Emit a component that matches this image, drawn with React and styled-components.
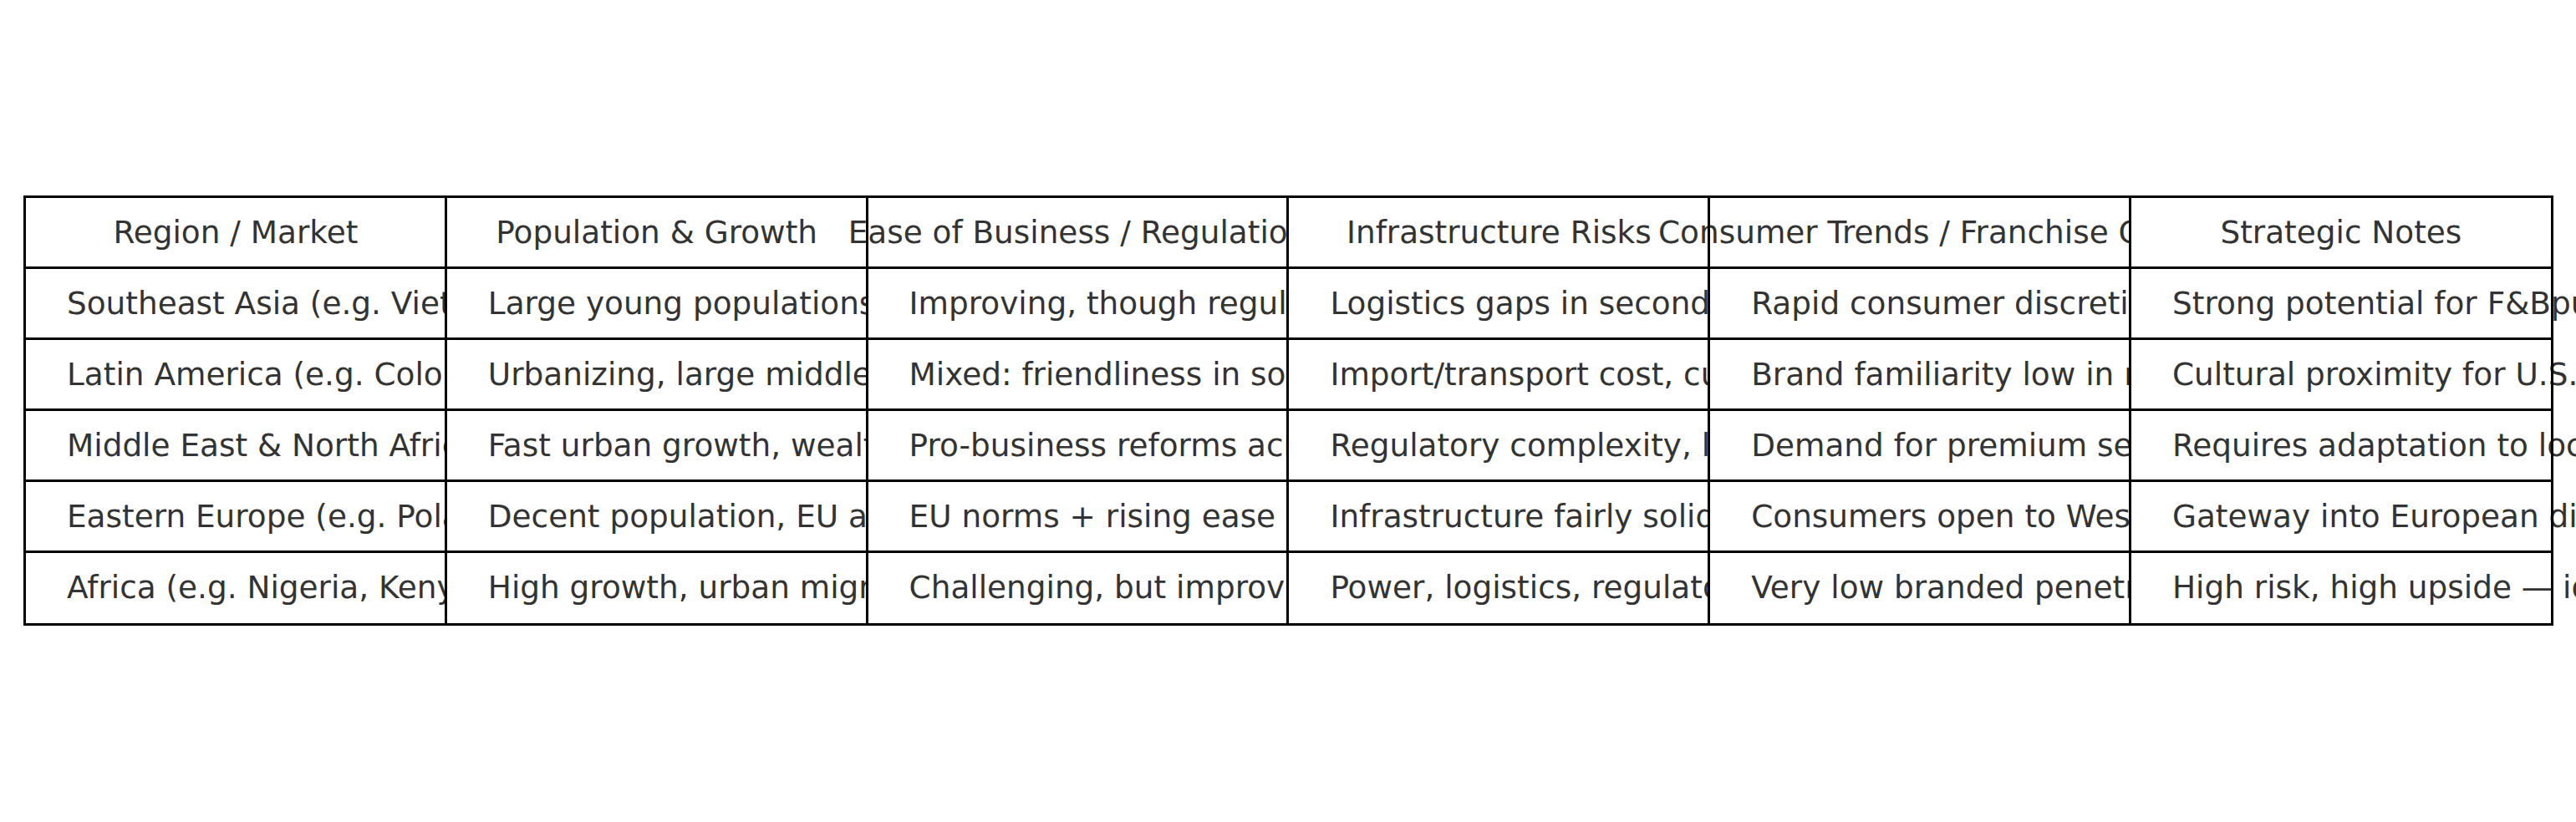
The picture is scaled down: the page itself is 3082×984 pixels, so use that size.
import React from 'react'
import styled, { createGlobalStyle } from 'styled-components'

const GlobalStyle = createGlobalStyle`
  html, body {
    margin: 0;
    padding: 0;
    background: #fff;
    overflow: hidden;
  }
`;

const Page = styled.div`
  width: 3082px;
  height: 984px;
  overflow: hidden;
  padding: 236px 0 0 30px;
  box-sizing: border-box;
  font-family: "DejaVu Sans", "Liberation Sans", sans-serif;
`;

const Table = styled.div`
  display: grid;
  grid-template-columns: repeat(6, 503.8px);
  grid-auto-rows: 85.1px;
  width: 3023px;
`;

const Cell = styled.div`
  position: relative;
  display: flex;
  align-items: center;
  justify-content: ${p => (p.$head ? 'center' : 'flex-start')};
  padding-left: ${p => (p.$head ? '0' : '50px')};
  padding-bottom: 2px;
  box-sizing: border-box;
  background: #fff;
  outline: 3px solid #000;
  outline-offset: -1.5px;
  white-space: nowrap;
  font-size: 37.4px;
  color: #333;
  min-width: 0;
`;

const Text = styled.span`
  flex: none;
`;

const headers = [
  'Region / Market',
  'Population & Growth',
  'Ease of Business / Regulation',
  'Infrastructure Risks',
  'Consumer Trends / Franchise Gap',
  'Strategic Notes',
];

const rows = [
  [
    'Southeast Asia (e.g. Vietnam, Indonesia)',
    'Large young populations, rising incomes',
    'Improving, though regulations vary',
    'Logistics gaps in secondary cities',
    'Rapid consumer discretionary growth',
    'Strong potential for F&Bpubs and QSR',
  ],
  [
    'Latin America (e.g. Colombia, Mexico)',
    'Urbanizing, large middle class',
    'Mixed: friendliness in some markets',
    'Import/transport cost, currency risk',
    'Brand familiarity low in many areas',
    'Cultural proximity for U.S. brands',
  ],
  [
    'Middle East & North Africa',
    'Fast urban growth, wealthy Gulf states',
    'Pro-business reforms across Gulf',
    'Regulatory complexity, licensing',
    'Demand for premium services',
    'Requires adaptation to local norms',
  ],
  [
    'Eastern Europe (e.g. Poland, Romania)',
    'Decent population, EU access',
    'EU norms + rising ease of business',
    'Infrastructure fairly solid',
    'Consumers open to Western brands',
    'Gateway into European distribution',
  ],
  [
    'Africa (e.g. Nigeria, Kenya)',
    'High growth, urban migration',
    'Challenging, but improving',
    'Power, logistics, regulatory gaps',
    'Very low branded penetration',
    'High risk, high upside — ideal for early movers',
  ],
];

export default function App() {
  return (
    <>
      <GlobalStyle />
      <Page>
        <Table>
          {headers.map(h => (
            <Cell key={h} $head>
              <Text>{h}</Text>
            </Cell>
          ))}
          {rows.map((r, i) =>
            r.map((c, j) => (
              <Cell key={i + '-' + j}>
                <Text>{c}</Text>
              </Cell>
            ))
          )}
        </Table>
      </Page>
    </>
  )
}
